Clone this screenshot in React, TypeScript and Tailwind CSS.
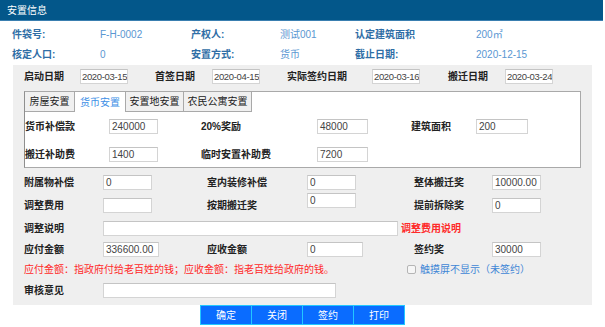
import React from "react";

const font = { fontFamily: '"Liberation Sans", "Noto Sans CJK SC", sans-serif' };

function Inp({ v = "", w = "w-[49px]", extra = "" }: { v?: string; w?: string; extra?: string }) {
  return (
    <div
      className={`${w} h-[15px] shrink-0 bg-white border border-[#d4d4d4] border-t-[#c4c4c4] text-[10px] leading-[13px] text-[#444] pl-[2px] overflow-hidden whitespace-nowrap ${extra}`}
    >
      {v}
    </div>
  );
}

function DateInp({ v }: { v: string }) {
  return (
    <div className="w-[48px] h-[15px] shrink-0 bg-white border border-[#d4d4d4] border-t-[#c4c4c4] text-[9.5px] leading-[13px] text-[#444] pl-[1px] overflow-hidden whitespace-nowrap tracking-[-0.35px]">
      {v}
    </div>
  );
}

function L({ t, w, extra = "" }: { t: string; w: string; extra?: string }) {
  return (
    <div className={`${w} shrink-0 text-[10px] font-bold text-[#222] whitespace-nowrap ${extra}`}>{t}</div>
  );
}

export default function App() {
  return (
    <div className="w-[605px] h-[327px] bg-white overflow-hidden" style={font}>
      {/* header */}
      <div className="h-[21px] w-[603px] bg-[#03578a] border-b border-[#3a7fb0] flex items-center pl-[7px] text-white text-[10px]">
        安置信息
      </div>

      {/* info */}
      <div className="pt-[3px] text-[10px]">
        {[
          ["件袋号:", "F-H-0002", "产权人:", "测试001", "认定建筑面积", "200㎡"],
          ["核定人口:", "0", "安置方式:", "货币", "截止日期:", "2020-12-15"],
        ].map((r, i) => (
          <div key={i} className="h-[20px] flex items-center pl-[12px]">
            <div className="w-[88px] font-bold text-[#2f6ea6]">{r[0]}</div>
            <div className="w-[91px] text-[#5a97d2]">{r[1]}</div>
            <div className="w-[89px] font-bold text-[#2f6ea6]">{r[2]}</div>
            <div className="w-[75px] text-[#5a97d2]">{r[3]}</div>
            <div className="w-[121px] font-bold text-[#2f6ea6]">{r[4]}</div>
            <div className="text-[#5a97d2]">{r[5]}</div>
          </div>
        ))}
      </div>

      {/* panel */}
      <div className="ml-[13px] mt-[1px] w-[579px] h-[240px] bg-[#efefef] pt-[4px] pl-[11px]">
        {/* dates row */}
        <div className="h-[15px] flex items-center">
          <L t="启动日期" w="w-[56px]" />
          <DateInp v="2020-03-15" />
          <div className="w-[27px]" />
          <L t="首签日期" w="w-[57px]" />
          <DateInp v="2020-04-15" />
          <div className="w-[27px]" />
          <L t="实际签约日期" w="w-[85px]" />
          <DateInp v="2020-03-16" />
          <div className="w-[28px]" />
          <L t="搬迁日期" w="w-[57px]" />
          <DateInp v="2020-03-24" />
        </div>

        {/* tab box */}
        <div className="mt-[7px] w-[557px] h-[77px] bg-white border border-[#a9a9a9] border-l-[#8f8f8f]">
          <div className="flex h-[20px] text-[10px]">
            <div className="w-[50px] bg-[#f0f0f0] border-r border-b border-[#a9a9a9] flex items-center justify-center text-[#222]">
              房屋安置
            </div>
            <div className="w-[50px] bg-white flex items-center justify-center text-[#3d8fe6]">货币安置</div>
            <div className="w-[59px] bg-[#f0f0f0] border-l border-r border-b border-[#a9a9a9] flex items-center justify-center text-[#222]">
              安置地安置
            </div>
            <div className="w-[68px] bg-[#f0f0f0] border-r border-b border-[#a9a9a9] flex items-center justify-center text-[#222]">
              农民公寓安置
            </div>
          </div>
          <div className="mt-[7px] h-[14px] flex items-center">
            <L t="货币补偿款" w="w-[84px]" />
            <Inp v="240000" w="w-[49px]" />
            <div className="w-[43px]" />
            <L t="20%奖励" w="w-[116px]" />
            <Inp v="48000" w="w-[51px]" />
            <div className="w-[43px]" />
            <L t="建筑面积" w="w-[65px]" />
            <Inp v="200" w="w-[52px]" />
          </div>
          <div className="mt-[14px] h-[14px] flex items-center">
            <L t="搬迁补助费" w="w-[84px]" />
            <Inp v="1400" w="w-[49px]" />
            <div className="w-[43px]" />
            <L t="临时安置补助费" w="w-[116px]" />
            <Inp v="7200" w="w-[51px]" />
          </div>
        </div>

        {/* lower rows */}
        <div className="mt-[7px] h-[14px] flex items-center">
          <L t="附属物补偿" w="w-[79px]" />
          <Inp v="0" />
          <div className="w-[55px]" />
          <L t="室内装修补偿" w="w-[100px]" />
          <Inp v="0" />
          <div className="w-[58px]" />
          <L t="整体搬迁奖" w="w-[78px]" />
          <Inp v="10000.00" />
        </div>
        <div className="mt-[9px] h-[14px] flex items-center">
          <L t="调整费用" w="w-[79px]" />
          <Inp v="" />
          <div className="w-[55px]" />
          <L t="按期搬迁奖" w="w-[100px]" />
          <Inp v="0" extra="-mt-[10px]" />
          <div className="w-[58px]" />
          <L t="提前拆除奖" w="w-[78px]" />
          <Inp v="0" />
        </div>
        <div className="mt-[9px] h-[14px] flex items-center">
          <L t="调整说明" w="w-[79px]" />
          <Inp v="" w="w-[295px]" />
          <div className="ml-[3px] text-[10px] font-bold text-[#ff2a2a] whitespace-nowrap">调整费用说明</div>
        </div>
        <div className="mt-[7px] h-[14px] flex items-center">
          <L t="应付金额" w="w-[79px]" />
          <Inp v="336600.00" w="w-[56px]" />
          <div className="w-[48px]" />
          <L t="应收金额" w="w-[100px]" />
          <Inp v="0" w="w-[56px]" />
          <div className="w-[51px]" />
          <L t="签约奖" w="w-[78px]" />
          <Inp v="30000" />
        </div>
        <div className="mt-[6px] h-[14px] flex items-center">
          <div className="w-[383px] shrink-0 text-[10px] text-[#ff2a2a] whitespace-nowrap">
            应付金额：指政府付给老百姓的钱；应收金额：指老百姓给政府的钱。
          </div>
          <div className="w-[9px] h-[9px] rounded-[2px] border border-[#b5b5b5] bg-[#f6f6f6] shrink-0" />
          <div className="ml-[4px] text-[10px] text-[#3f86d6] whitespace-nowrap">触摸屏不显示（未签约）</div>
        </div>
        <div className="mt-[7px] h-[14px] flex items-center">
          <L t="审核意见" w="w-[79px]" />
          <Inp v="" w="w-[233px]" />
        </div>
      </div>

      {/* buttons */}
      <div className="flex justify-center">
        {["确定", "关闭", "签约", "打印"].map((b, i) => (
          <div
            key={b}
            className={`w-[52px] h-[20px] bg-[#0a6cff] border border-[#22c8ff] ${i > 0 ? "-ml-px" : ""} flex items-center justify-center text-white text-[10px]`}
          >
            {b}
          </div>
        ))}
      </div>
    </div>
  );
}
